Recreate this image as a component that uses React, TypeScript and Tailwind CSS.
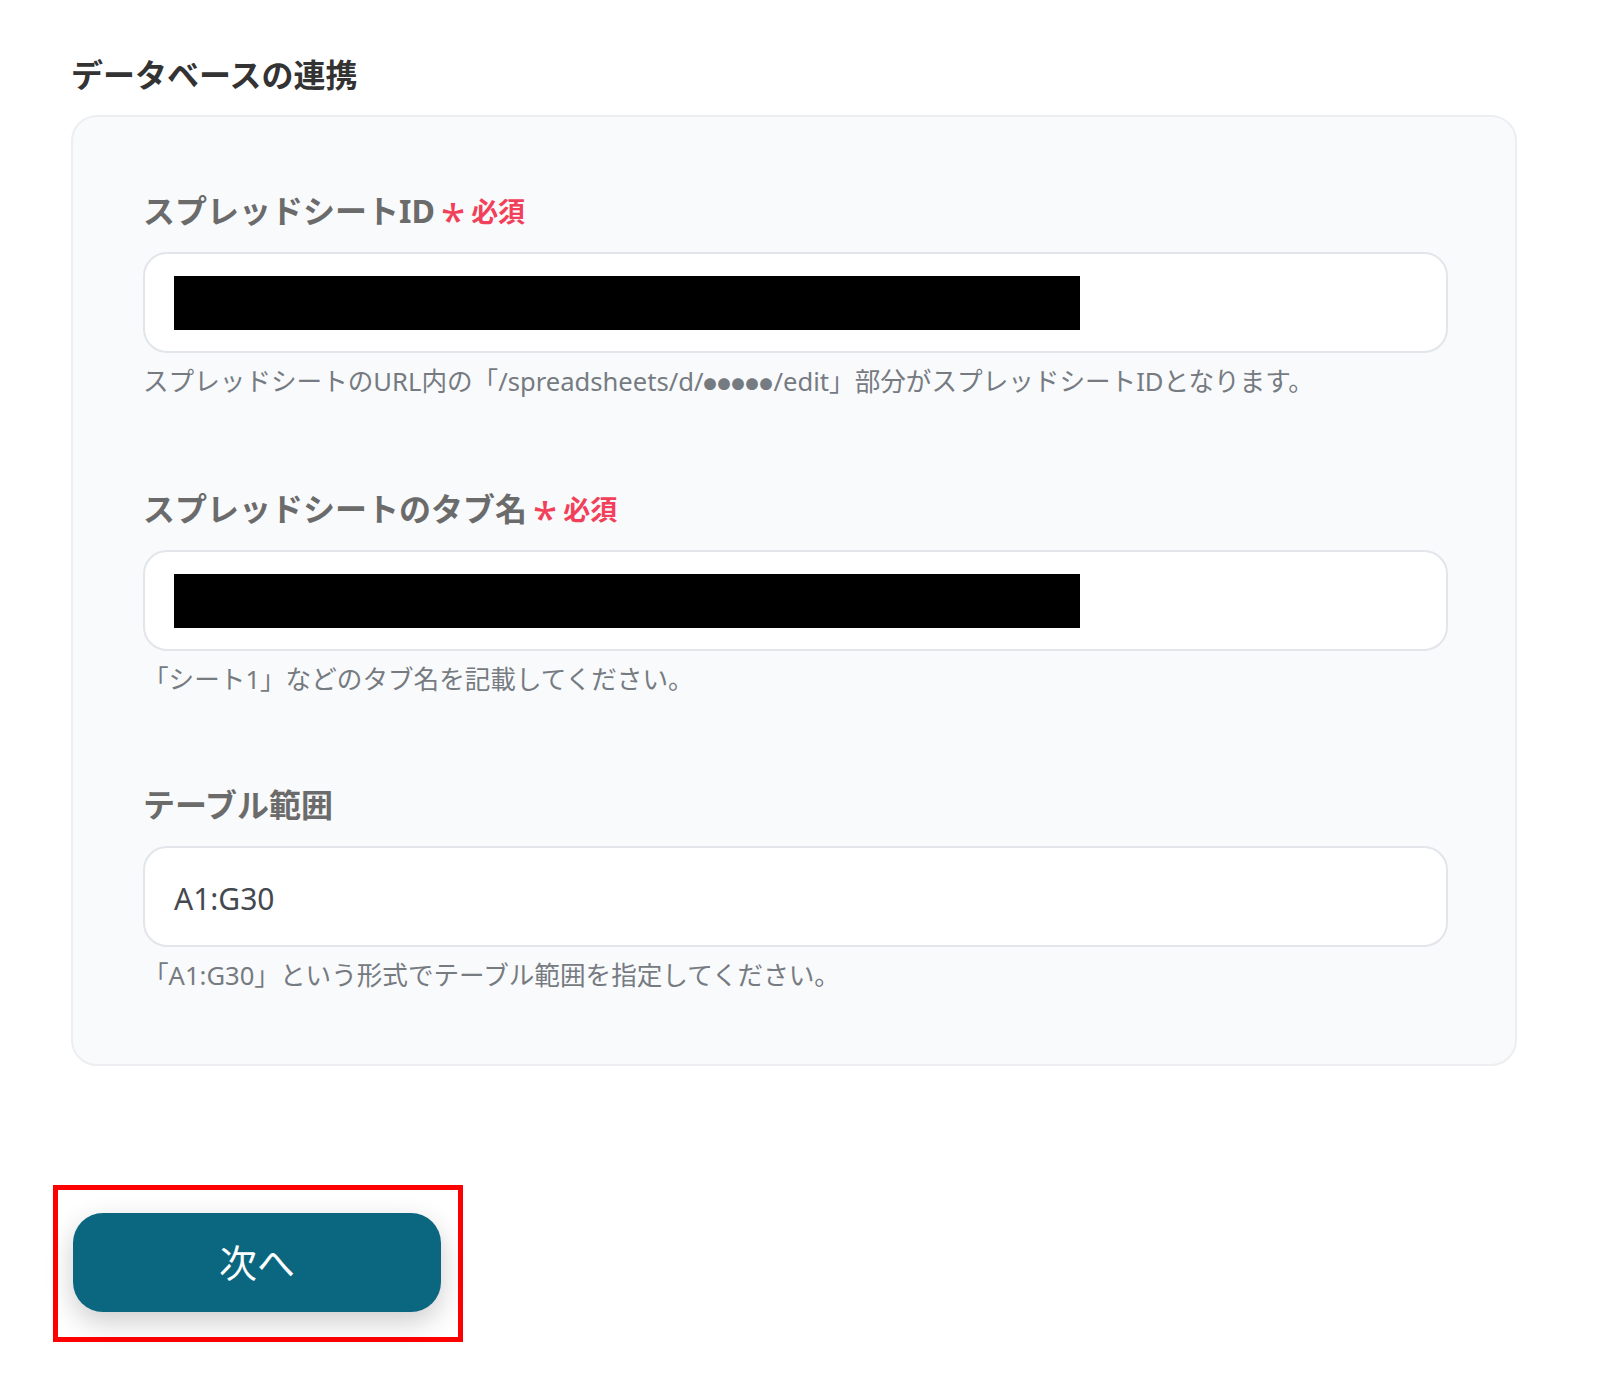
import type { ReactNode } from "react";

type FieldProps = {
  label: string;
  required?: boolean;
  help: ReactNode;
  children: ReactNode;
};

function Field({ label, required, help, children }: FieldProps) {
  return (
    <div className="flex flex-col">
      <div className="flex h-[40px] items-center">
        <span className="text-[32px] font-bold leading-[40px] text-[#6b6b6b]">{label}</span>
        {required ? (
          <span className="ml-[6px] flex items-center text-[#f23f5a]">
            <span className="mt-[16px] text-[44px] leading-none">*</span>
            <span className="ml-[6px] text-[27px] font-bold leading-none">必須</span>
          </span>
        ) : null}
      </div>
      <div className="mt-[21px] flex h-[101px] items-center rounded-[24px] border-2 border-[#e2e5e9] bg-white px-[29px]">
        {children}
      </div>
      <p className="mt-[14px] text-[25.6px] leading-[30px] text-[#767b82]">{help}</p>
    </div>
  );
}

function Redacted() {
  return <div className="h-[54px] w-[906px] bg-black" />;
}

export default function App() {
  return (
    <div
      className="min-h-[1383px] w-[1600px] bg-white"
      style={{ fontFamily: '"Noto Sans", "Noto Sans CJK JP", sans-serif' }}
    >
      <div className="flex flex-col pl-[71px] pr-[83px] pt-[55px]">
        <h2 className="text-[32px] font-bold leading-[40px] text-[#333333]">データベースの連携</h2>

        <section className="mt-[20px] flex flex-col gap-[90px] rounded-[26px] border-2 border-[#eceef1] bg-[#f9fafb] pb-[73px] pl-[70px] pr-[67px] pt-[74px]">
          <Field
            label="スプレッドシートID"
            required
            help={
              <>
                スプレッドシートのURL内の「/spreadsheets/d/
                <span className="align-middle text-[13px] tracking-[1px]">●●●●●</span>
                /edit」部分がスプレッドシートIDとなります。
              </>
            }
          >
            <Redacted />
          </Field>

          <Field
            label="スプレッドシートのタブ名"
            required
            help="「シート1」などのタブ名を記載してください。"
          >
            <Redacted />
          </Field>

          <Field label="テーブル範囲" help="「A1:G30」という形式でテーブル範囲を指定してください。">
            <span className="mt-[4px] text-[30px] leading-none text-[#444950]">A1:G30</span>
          </Field>
        </section>
      </div>

      <div className="ml-[53px] mt-[119px] w-[410px] border-[5px] border-[#ff0000] pb-[25px] pl-[15px] pr-[17px] pt-[23px]">
        <button
          type="button"
          className="flex h-[99px] w-full items-center justify-center rounded-[30px] bg-[#0b6780] text-[38px] text-white shadow-[0_10px_28px_rgba(0,0,0,0.2)]"
        >
          次へ
        </button>
      </div>
    </div>
  );
}
